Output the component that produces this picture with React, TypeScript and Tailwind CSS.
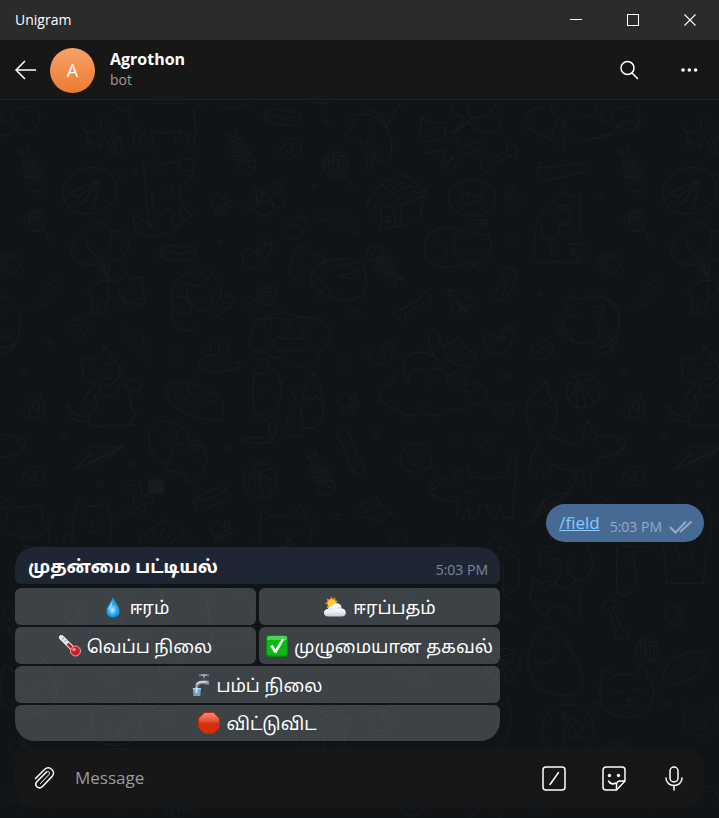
import type { ReactNode } from "react";

type SpotProps = { x: number; y: number; r?: number; s?: number };

const place = ({ x, y, r = 0, s = 1 }: SpotProps) => `translate(${x} ${y}) rotate(${r}) scale(${s})`;

const Paw = (p: SpotProps) => (
  <g transform={place(p)}>
    <path d="M-28 8C-36-8-22-30-8-28C2-26 0-22 6-16C14-8 14 4 4 8C-8 10-20 20-28 8Z" />
    <ellipse cx="18" cy="-20" rx="7" ry="10" />
    <ellipse cx="27" cy="0" rx="8" ry="10" />
    <circle cx="12" cy="22" r="9" />
    <circle cx="-10" cy="26" r="7" />
  </g>
);

const Bone = (p: SpotProps) => (
  <g transform={place(p)}>
    <path d="M-36-8C-34-26-52-30-54-14C-66-12-66 8-54 10C-52 26-34 24-34 8L34 8C34 24 52 26 54 10C66 8 66-12 54-14C52-30 34-26 36-8Z" />
  </g>
);

const Yarn = (p: SpotProps) => (
  <g transform={place(p)}>
    <circle r="34" />
    <path d="M-32-8Q0-34 26-20M-32 4Q0-22 32-8M-16-28Q-24 8-6 32M-4-32Q-14 0 8 32M12-10Q2 10 20 26M22-4Q16 12 28 18M20 30Q44 34 40 52Q44 62 56 60" />
  </g>
);

const Spiral = (p: SpotProps) => (
  <g transform={place(p)}>
    <path d="M-8-30C14-38 34-22 32 0C30 30-14 38-30 14C-40-10-14-22 0-12C10-4 6 10-6 10C-14 10-14 2-10 0" />
  </g>
);

const FishBone = (p: SpotProps) => (
  <g transform={place(p)}>
    <path d="M-16-70L0-52L18-70L10-40L-6-40ZM0-40L0 36M-28 36Q-26 62 0 70Q26 62 28 36Q0 24-28 36Z" />
    <path d="M-20-26L0-16L20-26M-24-12L0-2L24-12M-26 2L0 12L26 2M-28 16L0 26L28 16" />
    <path d="M-18-32L0-22L18-32M-22-18L0-8L22-18M-26-4L0 6L26-4M-28 10L0 20L28 10" />
    <circle cx="8" cy="48" r="3" />
  </g>
);

const Collar = (p: SpotProps) => (
  <g transform={place(p)}>
    <path d="M-54-10C-40-24 40-24 54-10L54 14C40 28-40 28-54 14ZM-54-10C-40 4 40 4 54-10M-14 2V24H14V2M-38 8V12M-26 12V16M26 12V16M38 8V12M-48 0V18" />
  </g>
);

const Bird = (p: SpotProps) => (
  <g transform={place(p)}>
    <path d="M-46 0L-36-4C-32-18-16-22-8-10L0 0C0-24 16-30 24-44C30-34 24-28 24-28C34-36 46-36 48-32C44-24 38-20 38-20L48-16C40-4 30 4 34 10C30 34-4 52-30 36C-42 24-42 10-38 4ZM-24-2V0M2 0L14-16M10 4L24-12" />
  </g>
);

const Mouse = (p: SpotProps) => (
  <g transform={place(p)}>
    <path d="M-70-16C-88-14-90-44-70-42C-62-38-66-32-70-32M-70-16L60 38C58 20 46 12 42 0C36-20 24-20 18-10C0-50-42-50-46-16M18-10C20 2 30 12 42 10M38 16V20M-70-16L-46-8" />
  </g>
);

const Flame = (p: SpotProps) => (
  <g transform={place(p)}>
    <path d="M22-46C18-26 32-14 30 12C28 44-26 44-30 12C-30-8-12-14-10-34C-2-26 0-22-2-14C12-22 16-34 22-46ZM-20 10C-12 0-8 4-4-8C0 0 2 2 0 8L16-8C20 10 14 26 0 30C-10 24-16 20-20 10Z" />
  </g>
);

const Plane = (p: SpotProps) => (
  <g transform={place(p)}>
    <path d="M42-40L-50 2L-20 12L42-40L26 40L-2 22L42-40M-20 12L-14 36L-2 22" />
  </g>
);

const Heart = (p: SpotProps) => (
  <g transform={place(p)}>
    <path d="M0 28C-18 16-34-2-26-16C-18-26-6-22-2-10C4-24 24-26 28-10C32 8 16 22 0 28Z" />
  </g>
);

const Ball = (p: SpotProps) => (
  <g transform={place(p)}>
    <circle r="51" />
    <circle cx="-14" cy="-16" r="10" />
    <path d="M-24-20L-46-22M-22-8L-44 28M-14-6Q-20 20-22 46M-8-8Q6 20 6 50M-4-12Q24 10 34 38M-4-18Q30-10 50 10M-8-24Q18-34 36-36M-16-26L-20-46" />
  </g>
);

const Kennel = (p: SpotProps) => (
  <g transform={place(p)}>
    <path d="M-48-56L16-86L88-34L86-20L14 12L6-10L-48-56L-92 14L-72 24L-40-26M14 12V70L72 46L80-18M-70 26L-50 82L14 70M-48 80V30C-44 4-10 6-6 32V72M6-10L88-34M-12-46L24-58M0-32L44-48M14-22L60-34M24-6V8M40-10V2M58-16V-6M-36 44H-20L-32 60H-18" />
  </g>
);

const Cloud = (p: SpotProps) => (
  <g transform={place(p)}>
    <path d="M-130 50C-160 56-170 20-196 22C-186-8-170-30-144-34C-150-66-112-76-98-54C-82-80-50-88-40-60C-20-88 20-84 26-54C60-84 94-50 86-26C120-40 154-22 150 8C140 42 100 40 90 34C80 60 50 58 30 50C0 80-40 74-60 56C-80 80-120 74-130 50ZM-98-54C-92-36-100-30-112-32M-40-60C-48-36-36-24-20-32M26-54C18-44 24-30 34-30M86-26C70-22 76-4 86-6M-60 56C-66 36-50 24-36 32M90 34C76 30 82 16 90 18" />
  </g>
);

const Cat = (p: SpotProps) => (
  <g transform={place(p)} strokeWidth="3">
    <path d="M-60 0C-66-30-60-60-56-76Q-44-72-36-60Q-10-68 14-62L30-88Q44-72 46-50C62-30 60-8 44 14C20 40-44 36-60 0ZM-30-20Q-22-32-14-22M14-26Q22-36 30-28M-4-8L4-12L8-4ZM2-4V4Q-8 12-12 4M2 4Q12 8 16 0M50-44L60-54M54-32L70-36M-62 0L-76-2M-58 8L-72 16" />
  </g>
);

const Wallpaper = () => {
  const repeated: ReactNode = (
    <>
      <path d="M0 55C20 70 40 62 40 34C66 18 110 10 120 42C124 74 90 104 60 94C48 92 48 72 60 68M44 86C38 106 18 110 8 104C4 114 0 116 0 116M0 30C16 30 16 48 2 46" />
      <path d="M244 70Q246 86 262 96L286 94L304 80Q298 56 318 52L324 66Q340 76 344 92L320 100Q312 118 296 122L300 146L280 126Q266 126 262 136Q256 122 270 112L256 96M322 122L360 110L368 158L350 164L348 148L334 164L322 122M338 124L350 144M354 118L336 140" />
      <FishBone x={95} y={210} r={-22} />
      <ellipse cx="270" cy="272" rx="82" ry="68" transform="rotate(-20 270 272)" />
      <Plane x={257} y={278} />
      <circle cx="362" cy="226" r="8" />
      <Yarn x={105} y={362} s={0.95} />
      <Paw x={30} y={490} r={180} />
      <path d="M296 472C246 450 244 372 296 366C346 372 346 450 300 472ZM252 412C210 414 200 460 236 484C256 498 280 498 292 490M334 400C366 380 400 410 384 444C372 470 350 484 330 486M296 476L326 538L330 486M306 478L328 538M288 490L326 536" />
      <path d="M326 540C300 540 276 560 264 582L280 588L274 640L288 642L294 606L300 640L312 642L324 590L372 628L378 616L360 592M326 540C320 570 326 590 334 600M326 540L352 544Q356 534 364 534L380 516L392 536L430 530L424 566L438 602Q424 622 406 612L378 608Q352 580 354 546M386 560V564M410 564V568M406 602Q420 590 434 602" />
      <Mouse x={134} y={590} r={100} s={0.8} />
      <path d="M0 588C30 592 58 622 60 662C60 700 54 752 0 764M0 616C20 622 20 650 0 654M0 712C20 700 40 710 38 738L0 744" />
      <circle cx="74" cy="816" r="8" />
      <path d="M244 768L266 780Q290 770 306 776L312 740Q328 752 332 772C356 786 362 812 358 824C352 850 330 854 322 856C296 866 250 846 248 820ZM276 816Q284 806 292 818M314 796Q324 784 330 794M306 824L322 828M310 832Q320 842 330 832M358 800L368 790M362 808L374 806M242 838L252 834M300 862C310 880 298 880 310 882C318 892 344 892 346 880C358 876 356 864 352 858M352 824L404 844Q424 840 426 848L412 876Q394 868 390 862L358 850M282 852C262 880 254 900 244 904L250 922L264 924L286 884L290 930M206 914C202 970 240 966 268 966M206 914C216 940 230 950 268 950M268 940C258 970 280 980 296 978L404 974Q396 964 388 968M376 850C394 880 392 900 392 930Q410 926 408 940L392 972M290 930Q266 932 266 956" />
      <Flame x={102} y={926} />
      <circle cx="190" cy="1008" r="8" />
      <path d="M0 1004C20 1004 50 1008 76 1020C80 1050 50 1072 0 1072M76 1020Q50 1010 50 1026Q56 1044 72 1044" />
      <path d="M222 1110L260 1070L274 1040L370 1040L222 1110L240 1098M260 1070L370 1040L268 1086M280 1104L370 1040L262 1096M274 1040L260 1076" />
      <Spiral x={102} y={1130} />
      <circle cx="300" cy="1154" r="8" />
      <path d="M0 1226L130 1216L126 1260L156 1258C150 1290 136 1300 120 1302C90 1330 20 1300 0 1280M60 1304L74 1340H150L146 1300M0 1190C30 1200 40 1220 44 1230M14 1220C28 1250 20 1270 0 1272M72 1280L82 1290" />
      <path d="M230 1340C214 1310 212 1270 222 1240L236 1202L260 1218H296L318 1204C324 1224 340 1260 334 1290Q332 1320 320 1340M256 1244V1260M296 1244V1260M270 1272L276 1280L284 1272M276 1280V1290M266 1294Q278 1300 288 1294M212 1256L202 1250M212 1270L200 1270M336 1256L346 1250M336 1272H346M190 1340C190 1300 208 1290 212 1310V1340" />
    </>
  );
  return (
    <svg
      aria-hidden="true"
      viewBox="0 0 2157 2154"
      preserveAspectRatio="xMinYMin slice"
      className="h-full min-h-0 w-full [grid-area:1/1] text-[#161b1f]"
      fill="none"
      stroke="currentColor"
      strokeWidth="4"
      strokeLinecap="round"
      strokeLinejoin="round"
    >
      {repeated}
      <g transform="translate(1800 0)">{repeated}</g>

      <path d="M330 0C350 30 370 30 388 34L390 62L420 86C400 90 396 120 404 134C430 140 420 110 432 96L446 134Q458 140 460 130L452 92Q490 106 546 92L520 120Q530 132 540 124L562 98L570 110Q556 134 570 138C586 140 586 110 586 90L582 24C600 16 610 8 612 0M452 10H560" />
      <circle cx="394" cy="18" r="7" />
      <circle cx="403" cy="217" r="7" />
      <path d="M460 382L402 344C396 370 406 384 408 392C430 416 480 412 510 396L576 346C556 338 540 310 540 260C570 250 586 220 582 182C570 170 550 178 534 184Q490 190 476 194L460 176L458 198L430 186L436 260C462 260 466 330 442 336Q444 364 460 382ZM534 184C536 220 570 220 580 200M496 262C494 290 520 286 516 262M472 224H474M488 208H490M476 352C490 320 526 326 520 350L516 378L530 374M538 334Q544 356 556 362M436 260L440 336" />
      <Collar x={848} y={50} r={6} />
      <path d="M660 0Q664 26 690 26Q740 20 762 4M932 4Q960 16 996 6M1080 42Q1048 42 1056 60L1064 76L1034 100Q1050 112 1080 124" />
      <circle cx="978" cy="67" r="7" />
      <FishBone x={722} y={158} r={-24} />
      <Spiral x={872} y={148} />
      <Yarn x={1006} y={194} s={1.1} />
      <circle cx="944" cy="261" r="7" />
      <Paw x={662} y={312} />
      <path d="M762 264L790 280Q790 256 814 256C830 260 830 280 816 282C850 280 866 306 850 318C830 326 818 316 816 306Q824 346 790 348L744 324Q770 330 776 312L762 264M776 312L816 300L790 280ZM820 250C836 240 850 256 840 264Z" />
      <Bird x={882} y={384} s={0.82} r={-4} />
      <Mouse x={1024} y={370} s={0.9} />
      <circle cx="662" cy="429" r="7" />
      <Collar x={534} y={458} r={2} />
      <Bird x={768} y={464} />
      <path d="M898 442L918 440L944 466L970 456L976 480M898 442C870 470 864 500 874 520C880 540 906 552 930 548M976 480C930 500 930 550 938 556C980 604 1050 610 1078 590M956 496C980 480 1050 460 1090 500C1104 540 1100 590 1078 590M1080 508L1016 530L1070 538M1060 490L1000 500M930 560L950 530L980 560M952 590L970 562M990 594L990 570M1010 600V578M896 490V494M926 498V502M880 540L900 560" />
      <path d="M520 660C510 600 510 520 580 516C610 514 620 524 630 530L638 514L660 560C670 590 650 630 610 634C570 630 556 590 560 548L590 560L630 530M530 590C560 580 580 620 570 640C550 650 530 640 520 620M644 576L650 570M600 590L612 594M626 604L638 600L630 590M640 632L694 616L650 650ZM660 590Q680 570 688 590Q710 590 700 610L670 606" />
      <Yarn x={802} y={586} s={0.9} />
      <path d="M740 604Q740 620 750 610Q764 590 774 604M776 660Q860 620 914 660M220 660Q236 650 252 660M1044 650Q1060 620 1080 640" />

      <path d="M1080 42C1130 40 1160 70 1174 120C1180 180 1160 200 1140 186C1110 180 1130 140 1150 142M1080 126L1128 170M1098 160L1100 200Q1110 210 1116 200L1120 168M1098 30L1140 40L1160 80C1180 40 1200 10 1210 0M1116 94Q1130 90 1118 80" />
      <circle cx="1102" cy="125" r="5" />
      <path d="M1360 0C1350 30 1370 50 1394 50M1404 0C1394 30 1410 50 1420 54M1486 0C1494 30 1450 54 1410 56L1360 100L1394 54M1360 100L1410 64M1490 28C1520 50 1504 96 1460 96C1430 96 1420 84 1412 72" />
      <path d="M1266 54L1286 66L1320 70L1338 66L1334 98C1340 120 1300 128 1282 122C1260 120 1258 90 1262 80ZM1334 98L1360 100L1384 136L1440 126Q1460 134 1446 148L1388 164L1350 216L1340 206L1360 170L1326 202L1324 190L1336 150L1274 160L1282 146M1282 92V96M1300 88V92M1276 104L1290 112" />
      <Bone x={1498} y={176} r={-32} />
      <path d="M1720 52C1680 60 1690 100 1720 100C1740 136 1780 112 1776 114C1810 120 1810 100 1840 104C1840 70 1860 80 1890 90C1920 90 1930 60 1906 50C1930 20 1910 0 1900 0M1564 76C1580 30 1600 20 1630 26M1564 76L1600 92Q1620 110 1650 112C1656 140 1680 150 1696 146C1690 110 1680 90 1690 66C1660 40 1640 30 1660 0M1720 30C1740 60 1800 50 1790 20M1860 80C1860 60 1880 60 1890 70M1656 112C1660 70 1670 50 1690 40" />
      <path d="M1612 204L1744 190Q1762 200 1752 216L1628 244Q1610 236 1612 204ZM1612 220Q1630 206 1640 236M1616 200Q1614 186 1620 184" />
      <Kennel x={1190} y={306} />
      <ellipse cx="1416" cy="295" rx="70" ry="54" />
      <path d="M1384 296C1394 270 1424 280 1432 292L1446 282V310L1432 302C1414 320 1390 316 1384 296ZM1404 282Q1410 296 1404 310" />
      <Flame x={1534} y={298} s={0.8} r={-20} />
      <path d="M1606 468C1596 400 1606 320 1700 276L1716 292L1740 284Q1744 340 1740 400C1730 420 1700 410 1706 390M1606 468Q1590 460 1596 470C1610 490 1640 494 1656 484L1720 488L1760 484M1636 416C1620 400 1620 380 1624 376M1640 416C1670 420 1690 400 1676 384M1640 416C1670 430 1650 470 1650 480M1706 432L1764 434L1736 482L1706 432M1708 470L1730 440" />
      <circle cx="1688" cy="346" r="30" />
      <circle cx="1688" cy="346" r="20" />
      <circle cx="1806" cy="286" r="7" />
      <circle cx="1539" cy="422" r="8" />
      <circle cx="1619" cy="580" r="7" />
      <path d="M1370 386C1310 370 1270 400 1274 450C1280 500 1330 510 1376 496M1370 400L1396 382L1410 398L1450 406L1466 400L1474 440C1474 480 1440 496 1410 492C1370 480 1350 440 1370 400M1318 430C1350 430 1350 474 1310 476M1380 492L1400 506L1420 498L1440 510L1460 488M1390 456L1400 462M1430 464L1444 462M1426 360H1462V372H1430M1440 380V384" />
      <FishBone x={1154} y={496} r={140} />
      <Collar x={1520} y={552} r={112} s={0.95} />
      <Bone x={1238} y={618} r={-32} />
      <path d="M1342 566L1436 602L1406 616L1400 636L1384 622L1364 644ZM1342 566L1384 622L1406 616M1342 566L1400 636" />
      <path d="M1684 660L1714 586L1740 600C1790 570 1850 600 1856 660C1860 700 1840 720 1810 740M1690 660Q1680 690 1700 700M1780 620L1812 620L1800 650M1700 660Q1720 640 1730 650" />

      <Spiral x={238} y={686} s={0.8} />
      <circle cx="152" cy="727" r="7" />
      <Mouse x={416} y={734} r={22} s={0.8} />
      <path d="M516 660Q524 690 560 692Q590 690 588 676" />
      <Spiral x={526} y={768} s={0.6} />
      <path d="M594 800C600 760 670 750 694 790L722 786L714 812L692 808C670 820 610 820 594 800ZM616 790Q624 770 632 786M650 780Q658 768 664 782M610 764Q604 754 612 742M634 752Q628 740 634 724M656 756Q662 742 654 732M684 756Q678 744 682 730" />
      <path d="M498 860C510 840 570 840 630 870C676 890 672 930 668 958C620 962 570 950 540 930C510 910 490 880 498 860ZM556 860C570 850 650 880 650 902C630 910 570 890 556 860Z" />
      <Bone x={554} y={900} r={36} s={0.55} />
      <path d="M770 756C740 750 744 700 760 690C750 670 770 650 790 662C830 640 850 660 870 664C900 640 960 650 984 680C1000 720 980 750 956 756C960 790 910 810 880 796Q860 790 850 764Q830 780 810 768Q800 752 770 756ZM820 740C810 720 830 700 846 716L900 716C920 700 940 740 914 752L840 752ZM806 700Q820 680 810 670M860 690Q880 680 860 664M904 700Q920 690 906 676M830 732H834M852 738H856M880 730H884M900 738H904" />
      <path d="M762 810L776 824L804 808V796L830 816C850 850 850 920 800 960C780 970 760 960 764 940C754 900 760 860 762 810ZM846 850C880 870 900 920 906 960L908 1008L860 1008L876 996C850 980 860 940 882 944M906 960C900 900 910 860 940 820C970 860 990 960 940 984L912 984M906 900L918 890L930 904L946 886L966 904M808 966V1008L830 1006L826 970M776 868V876M808 864V872M762 950Q780 930 796 958" />
      <ellipse cx="774" cy="1021" rx="50" ry="8" />
      <ellipse cx="796" cy="781" rx="13" ry="6" />
      <Spiral x={1034} y={792} s={0.6} />
      <Paw x={1042} y={910} />
      <path d="M1012 1000L1062 1120Q1080 1124 1096 1110L1040 990Q1020 980 1012 1000ZM1062 1120Q1048 1096 1080 1094" />
      <path d="M510 1090C450 1090 430 1010 460 980C490 950 550 960 566 1020M510 1090L520 1050Q530 1026 566 1030M510 1090Q490 1100 504 1110L550 1120L566 1146C600 1140 630 1100 618 1062C610 1040 590 1030 566 1030M510 984C540 990 540 1030 500 1026L484 1014M570 1024Q600 1010 620 1050M540 1064L554 1056M580 1090L590 1078M566 1030Q580 1060 600 1040" />
      <circle cx="682" cy="1041" r="8" />
      <circle cx="398" cy="1094" r="8" />
      <path d="M376 1170Q372 1150 400 1158Q406 1140 424 1150V1180L450 1190Q462 1200 458 1210L430 1212L438 1240L404 1224L400 1240L372 1236L398 1220L402 1190L376 1170M410 1180V1184" />
      <rect x="446" y="1140" width="44" height="40" rx="4" fill="currentColor" />
      <Collar x={632} y={1194} r={-22} />
      <Ball x={782} y={1142} />
      <FishBone x={960} y={1122} r={-26} />
      <Paw x={662} y={1292} />
      <path d="M420 1312L490 1260L556 1290L590 1340M420 1312L424 1336L494 1350L556 1290M450 1316L470 1290M470 1326L494 1284M490 1330L524 1290" />
      <Cat x={860} y={1330} s={1.3} />
      <circle cx="1015" cy="1250" r="8" />

      <Bird x={1144} y={756} s={0.9} />
      <Bird x={1496} y={720} s={1.05} />
      <path d="M1228 850C1200 820 1210 770 1240 760C1280 750 1300 770 1316 780C1276 740 1280 690 1310 690C1324 696 1314 730 1328 740L1380 712L1396 744L1430 764L1410 800C1380 800 1350 800 1328 740M1346 780Q1338 790 1346 786M1376 776L1386 782" />
      <Cloud x={1318} y={880} s={0.95} />
      <Spiral x={1626} y={750} />
      <path d="M1668 676C1690 720 1740 740 1760 724M1680 660L1720 722M1760 724C1800 740 1810 680 1790 660M1784 760C1800 770 1850 760 1852 730" />
      <circle cx="1520" cy="824" r="8" />
      <Heart x={1510} y={932} />
      <Ball x={1750} y={872} />
      <path d="M1618 1016C1580 990 1560 920 1600 880Q1636 850 1644 838Q1630 870 1660 900C1690 950 1660 990 1644 1004C1680 1020 1720 1036 1742 1034L1762 962L1790 1010Q1830 1006 1876 1020C1880 1050 1840 1066 1796 1072Q1800 1090 1776 1104C1770 1130 1780 1160 1762 1166C1746 1160 1760 1130 1740 1110L1720 1156Q1706 1160 1706 1146L1734 1110Q1690 1116 1650 1090L1650 1130Q1640 1140 1630 1120L1618 1096L1604 1130C1584 1130 1590 1080 1596 1066C1610 1050 1616 1030 1618 1016M1594 910L1612 916L1624 904L1636 912L1656 896M1780 1020L1790 1016" />
      <Spiral x={1462} y={1020} s={0.8} r={180} />
      <circle cx="1126" cy="1003" r="8" />
      <circle cx="1365" cy="1021" r="8" />
      <path d="M1284 1100A46 44 0 1 1 1290 1090L1296 1104Z" />
      <Heart x={1242} y={1072} s={0.8} />
      <path d="M1284 1160C1290 1140 1340 1130 1362 1134L1370 1098L1382 1120L1400 1094L1412 1130Q1480 1140 1524 1126C1526 1090 1530 1060 1542 1070C1556 1090 1550 1120 1544 1150L1538 1250Q1520 1260 1510 1250L1500 1216L1490 1252L1468 1250L1460 1214L1440 1214L1430 1256L1410 1254L1404 1220L1390 1256L1370 1250L1376 1200C1340 1210 1290 1200 1284 1160ZM1284 1160Q1310 1180 1322 1140M1364 1138V1140M1384 1144V1146M1394 1180Q1410 1170 1416 1182Q1414 1196 1400 1196" />
      <path d="M1582 1274L1640 1190L1714 1176L1582 1274M1600 1240L1714 1176M1640 1190L1600 1270M1080 1216L1130 1190L1160 1240L1180 1240L1140 1264L1080 1250M1100 1230L1140 1210" />
      <Heart x={1194} y={1316} />
      <path d="M1460 1340L1490 1300L1540 1340M1320 1340Q1340 1326 1380 1340M1620 1400C1610 1370 1630 1330 1660 1340M1700 1330Q1740 1290 1760 1340" />

      <path d="M1480 1420L1500 1340L1556 1380V1460L1500 1500M1510 1400V1480M1640 1400C1650 1370 1690 1360 1680 1420Q1670 1450 1650 1460M1760 1340C1790 1380 1780 1440 1730 1440C1690 1420 1700 1380 1720 1360M1690 1470L1730 1440M1850 1340V1480Q1880 1500 1910 1460L1900 1340M1880 1380H1900M1990 1340L2000 1450H2110L2120 1350M2030 1340L2040 1380M2070 1350L2080 1390M1590 1490L1600 1430L1620 1450L1660 1440L1680 1460L1740 1480V1550L1720 1560L1700 1520L1650 1520L1640 1550L1620 1540ZM1610 1470V1474M1634 1470V1474" />
      <Bone x={1846} y={1560} r={65} />
      <Paw x={2024} y={1548} />
      <circle cx="1526" cy="1552" r="9" />
      <path d="M1604 1750C1570 1700 1580 1630 1620 1590C1660 1570 1700 1610 1710 1650C1750 1700 1760 1760 1730 1784C1680 1790 1620 1780 1604 1750M1606 1680C1620 1700 1660 1690 1670 1660M1630 1622H1640M1666 1622H1674" />
      <Yarn x={1940} y={1650} />
      <Ball x={1510} y={1696} />
      <path d="M1990 1720C2000 1670 2080 1640 2120 1660C2130 1700 2070 1760 2010 1750Q1990 1740 1990 1720Z" />
      <Bone x={2060} y={1696} r={-30} s={0.55} />
      <Cat x={1884} y={1810} s={1.35} />
      <circle cx="1704" cy="1890" r="78" />
      <Plane x={1710} y={1890} r={-70} />
      <Paw x={1850} y={1950} s={0.9} />
      <circle cx="2000" cy="1812" r="8" />
      <Cat x={2110} y={1880} s={0.9} />
      <path d="M1500 1940C1540 1900 1540 1820 1520 1790M1410 2154Q1460 2080 1500 2154M1840 2110Q1900 2070 1960 2130M2060 2080C2100 2040 2157 2060 2157 2100" />

      <path d="M0 1510Q24 1500 40 1540L60 1600M20 1570L44 1620" />
      <Bone x={20} y={1560} r={55} s={0.8} />
      <Cat x={90} y={1800} s={1.4} />
      <Paw x={56} y={1946} s={0.9} />
      <Paw x={224} y={1550} />
      <path d="M340 1500L470 1450L520 1560L390 1620ZM370 1510L470 1540M620 1500C640 1450 740 1450 760 1530L740 1640H640Z" />
      <Bone x={470} y={1820} r={40} />
      <Cat x={350} y={1900} s={1.2} />
      <Mouse x={1230} y={1720} />
      <Kennel x={960} y={1890} />
      <FishBone x={540} y={1680} r={60} />
      <Bird x={1150} y={1850} />
      <Heart x={330} y={1720} />
      <Cloud x={1180} y={1440} s={0.7} />
      <FishBone x={560} y={2110} r={70} />
      <path d="M0 2080Q50 2040 90 2080L60 2130M110 2070L150 2130M120 2120L160 2100M360 2130Q400 2060 440 2130M20 2100L70 2110" />
      <FishBone x={1640} y={2100} r={60} s={0.8} />
      <Spiral x={1240} y={2120} />
    </svg>
  );
};

const emojiClass = "h-[22px] w-[22px] shrink-0";

const Droplet = () => (
  <svg role="img" aria-label="💧" viewBox="0 0 22 22" className={emojiClass}>
    <defs>
      <linearGradient id="drop" x1="0" y1="0" x2="0" y2="1">
        <stop offset="0" stopColor="#0a8ad8" />
        <stop offset="0.5" stopColor="#25a9f0" />
        <stop offset="1" stopColor="#0797e8" />
      </linearGradient>
      <radialGradient id="dropShine">
        <stop offset="0" stopColor="#d9f6ff" />
        <stop offset="1" stopColor="#7fd6ff" stopOpacity="0.1" />
      </radialGradient>
    </defs>
    <path d="M11 0.500C12 5 17.500 10.500 17.500 15.500A6.500 6 0 0 1 4.500 15.500C4.500 10.500 10 5 11 0.500Z" fill="url(#drop)" />
    <ellipse cx="10.500" cy="14" rx="4.500" ry="6" fill="url(#dropShine)" />
    <path d="M10.600 4C9.500 8 7 11 6.500 14C9 12 10.500 8 10.600 4Z" fill="#b5e9ff" />
  </svg>
);

const SunCloud = () => (
  <svg role="img" aria-label="🌥" viewBox="0 0 24 22" className="h-[22px] w-6 shrink-0">
    <defs>
      <linearGradient id="cloud" x1="0" y1="0" x2="0" y2="1">
        <stop offset="0" stopColor="#ffffff" />
        <stop offset="0.6" stopColor="#f1f2f7" />
        <stop offset="1" stopColor="#c6cbd8" />
      </linearGradient>
    </defs>
    <path d="M8.500 0.500L9.800 3L12.500 1.500L12.300 4.500L15 5L13 7.500L13 11L3.500 12L4.800 8.800L2 7.500L4.500 5.500L3.500 2.500L6.800 3.500Z" fill="#e98a12" />
    <circle cx="8.800" cy="7.200" r="4" fill="#ffc83a" />
    <path d="M5.500 20.500C-0.500 20.500-0.500 13 5 13C5.500 10.500 7.500 10 9 10.500C10.500 5.500 19 6.500 18.500 12.500C24 12.500 24.500 20.500 18.500 20.500Z" fill="url(#cloud)" />
    <path d="M5 14.500C6.500 12.500 9.500 12.500 10.500 14.500M14 12.500C15.500 11 18 11.500 18.500 13" stroke="#d4d8e4" fill="none" />
  </svg>
);

const Thermometer = () => (
  <svg role="img" aria-label="🌡" viewBox="0 0 22 22" className={emojiClass}>
    <path d="M2.500 2.500L15 15" stroke="#e9edf0" strokeWidth="5" strokeLinecap="round" />
    <path d="M9.500 9.500L16 16" stroke="#c5161d" strokeWidth="3" strokeLinecap="round" />
    <path d="M3 4.500L5 2.800M5.500 7L7.500 5M8 9.500L10 7.500" stroke="#77818a" strokeWidth="1" />
    <circle cx="16.500" cy="16" r="5" fill="#cf1f29" stroke="#dfa9ac" />
    <circle cx="15" cy="14.500" r="1.800" fill="#f58f93" />
  </svg>
);

const CheckBox = () => (
  <svg role="img" aria-label="✅" viewBox="0 0 22 22" className={emojiClass}>
    <rect width="22" height="22" rx="3" fill="#078a0c" />
    <rect x="1" y="1" width="20" height="19.500" rx="2.500" fill="#0db914" />
    <path d="M1 3.500A2.500 2.500 0 0 1 3.500 1H18.500A2.500 2.500 0 0 1 21 3.500V5H1Z" fill="#4ed257" />
    <path d="M4 11L6.800 10L9.300 14.500L15.800 4L18.300 4.500L10.300 18H8.500Z" fill="#fff" />
  </svg>
);

const Tap = () => (
  <svg role="img" aria-label="🚰" viewBox="0 0 18 22" className="h-[22px] w-[18px] shrink-0">
    <path d="M8 1H16M12 1V6" stroke="#aebac4" strokeWidth="1.500" strokeLinecap="round" />
    <circle cx="8" cy="1.500" r="1.200" fill="#5f6f7b" />
    <circle cx="16" cy="1.500" r="1.200" fill="#5f6f7b" />
    <path d="M9.500 3.500H14.500L15.500 6.500H8.500Z" fill="#3e5260" />
    <path d="M3 12.500C3.500 8 6.500 6.500 10 6.500H16.500C17.500 8 17.500 9.500 16.500 11L11 10C8.500 9.500 6.500 11 6 13Z" fill="#7c8b97" />
    <path d="M4.500 10.500C6 7.800 9 7.800 15.500 8" stroke="#edf4f8" strokeWidth="1.200" fill="none" />
    <path d="M0.800 14H9L8.300 22H1.500Z" fill="#6fa5c6" />
    <path d="M0.800 14H9L8.800 15.500H1Z" fill="#a9cbdc" />
    <path d="M4.500 12.500V19" stroke="#c6e7f7" strokeWidth="1.800" />
  </svg>
);

const StopSign = () => (
  <svg role="img" aria-label="🛑" viewBox="0 0 22 22" className={emojiClass}>
    <defs>
      <linearGradient id="stop" x1="0" y1="0" x2="0" y2="1">
        <stop offset="0" stopColor="#f58a76" />
        <stop offset="0.45" stopColor="#e44a2c" />
        <stop offset="0.5" stopColor="#d52f0c" />
        <stop offset="1" stopColor="#d62c08" />
      </linearGradient>
    </defs>
    <path d="M6.500 0.500H15.500L21.500 6.500V15.500L15.500 21.500H6.500L0.500 15.500V6.500Z" fill="url(#stop)" stroke="#b92708" />
  </svg>
);

type Key = { icon: ReactNode; label: string; shape: string };

const keyboard: Key[] = [
  { icon: <Droplet />, label: "ஈரம்", shape: "h-[37px]" },
  { icon: <SunCloud />, label: "ஈரப்பதம்", shape: "h-[37px]" },
  { icon: <Thermometer />, label: "வெப்ப நிலை", shape: "h-[37px]" },
  { icon: <CheckBox />, label: "முழுமையான தகவல்", shape: "h-[37px]" },
  { icon: <Tap />, label: "பம்ப் நிலை", shape: "h-[37px] col-span-2" },
  { icon: <StopSign />, label: "விட்டுவிட", shape: "h-9 col-span-2 rounded-b-[20px]" },
];

const windowButton = "flex h-full w-[57px] items-center justify-center";
const iconButton = "flex h-[60px] w-[60px] items-center justify-center";

export default function App() {
  return (
    <div className="flex h-screen min-h-[480px] flex-col overflow-hidden bg-[#101417] font-['Open_Sans','Noto_Sans_Tamil',sans-serif] text-white">
      <div className="flex h-10 shrink-0 items-center bg-[#2b2b2b] pr-px pb-px pl-[15px]">
        <span className="flex-1 text-sm">Unigram</span>
        <button aria-label="Minimize" className={windowButton}>
          <svg width="12" height="12" shapeRendering="crispEdges">
            <path d="M0 5.500H12" stroke="#fff" />
          </svg>
        </button>
        <button aria-label="Maximize" className={windowButton}>
          <svg width="12" height="12" fill="none" shapeRendering="crispEdges">
            <rect x="0.500" y="0.500" width="11" height="11" stroke="#fff" />
          </svg>
        </button>
        <button aria-label="Close" className={windowButton}>
          <svg width="12" height="12">
            <path d="M0.500 0.500L11.500 11.500M11.500 0.500L0.500 11.500" stroke="#fff" strokeWidth="1.100" />
          </svg>
        </button>
      </div>

      <header className="flex h-[60px] shrink-0 items-center border-b border-[#1f2224] bg-[#171717] pt-px">
        <button aria-label="Back" className="flex h-full w-[50px] items-center justify-center">
          <svg width="22" height="20" fill="none" stroke="#fff" strokeWidth="1.500">
            <path d="M22 10H2M11 1L2 10L11 19" />
          </svg>
        </button>
        <div className="flex size-[45px] items-center justify-center rounded-full bg-linear-to-b from-[#f7a168] to-[#ee7a2b] text-lg">
          A
        </div>
        <div className="ml-[15px] flex-1 pb-[3px]">
          <h1 className="text-base leading-[22px] font-bold">Agrothon</h1>
          <p className="text-sm leading-5 text-[#9b9b9b]">bot</p>
        </div>
        <button aria-label="Search" className={iconButton}>
          <svg width="20" height="20" fill="none" stroke="#fff" strokeWidth="1.500" strokeLinecap="round">
            <circle cx="8.500" cy="8" r="6.500" />
            <path d="M13 13L18.500 18.500" />
          </svg>
        </button>
        <button aria-label="More" className={iconButton}>
          <svg width="18" height="4" fill="#fff">
            <circle cx="3" cy="2" r="1.800" />
            <circle cx="9.300" cy="2" r="1.800" />
            <circle cx="15.600" cy="2" r="1.800" />
          </svg>
        </button>
      </header>

      <main className="grid min-h-0 flex-1 grid-rows-[minmax(0,1fr)]">
        <Wallpaper />
        <div className="z-10 flex min-h-0 flex-col justify-end px-[15px] pb-[10px] [grid-area:1/1]">
          <div className="mb-[5px] flex h-[38px] items-center gap-[10px] self-end rounded-full bg-[#476a94] pr-[11px] pl-[13px]">
            <a href="#field" className="text-[17px] leading-6 text-[#83caff] underline">
              /field
            </a>
            <span className="flex items-center gap-[7px] pt-2 text-sm leading-5 text-[#91abc8]">
              5:03 PM
              <svg aria-label="Read" role="img" width="24" height="14" fill="none" stroke="currentColor" strokeWidth="2">
                <path d="M1 7L6.500 12.500L17 1.500M11 12L22.500 1.500" />
              </svg>
            </span>
          </div>

          <div className="w-[485px] max-w-full">
            <div className="mb-1 flex h-[37px] items-center justify-between rounded-t-[20px] rounded-b-md bg-[#1d2632] pr-3 pl-[13px]">
              <p className="text-lg leading-6 font-bold">முதன்மை பட்டியல்</p>
              <span className="pt-2 text-sm leading-5 text-[#7b8793]">5:03 PM</span>
            </div>
            <div className="grid grid-cols-2 gap-x-[3px] gap-y-0.5">
              {keyboard.map((key) => (
                <button
                  key={key.label}
                  className={`flex items-center justify-center gap-[6px] rounded-md bg-[#f0fcff]/20 text-lg whitespace-nowrap ${key.shape}`}
                >
                  {key.icon}
                  <span>{key.label}</span>
                </button>
              ))}
            </div>
          </div>

          <form className="mt-[7px] flex h-[60px] items-center rounded-[20px] bg-[#171717]" onSubmit={(e) => e.preventDefault()}>
            <button type="button" aria-label="Attach" className={iconButton}>
              <svg width="22" height="24" viewBox="0 0 22 24" fill="none" stroke="#fff" strokeWidth="1.500" strokeLinecap="round">
                <path d="M1.500 12.500L10.500 3.500C15.500-1 22.500 5.500 18 10.500L8.500 20.500C4.500 24 -0.500 19.500 3 15.500L12.500 6" />
                <path d="M12.500 6C14.500 4.500 16.500 6.500 15 8.500L6.500 17.500" strokeWidth="1" />
              </svg>
            </button>
            <input
              aria-label="Message"
              placeholder="Message"
              className="min-w-0 flex-1 bg-transparent text-[17px] outline-none placeholder:text-[#9b9b9b]"
            />
            <button type="button" aria-label="Commands" className={iconButton}>
              <svg width="24" height="25" fill="none" stroke="#fff" strokeWidth="1.500" strokeLinecap="round">
                <rect x="1" y="1" width="22" height="23" rx="3" />
                <path d="M16.500 6.500L8 18.500" />
              </svg>
            </button>
            <button type="button" aria-label="Stickers" className={iconButton}>
              <svg width="24" height="25" fill="none" stroke="#fff" strokeWidth="1.500" strokeLinejoin="round">
                <path d="M4 1H20A3 3 0 0 1 23 4V15L14.500 24H4A3 3 0 0 1 1 21V4A3 3 0 0 1 4 1Z" />
                <path d="M23 15H18A3.500 3.500 0 0 0 14.500 18.500V24" />
                <path d="M6.500 15C8 17.500 11 18.500 14 17" strokeLinecap="round" />
                <circle cx="7.500" cy="9.500" r="1.700" fill="#fff" stroke="none" />
                <circle cx="16.500" cy="9.500" r="1.700" fill="#fff" stroke="none" />
              </svg>
            </button>
            <button type="button" aria-label="Record voice message" className={iconButton}>
              <svg width="18" height="25" fill="none" stroke="#fff" strokeWidth="1.500" strokeLinecap="round">
                <rect x="5" y="1" width="8" height="15" rx="4" />
                <path d="M1 12C1 22 17 22 17 12M9 20V24" />
              </svg>
            </button>
          </form>
        </div>
      </main>
    </div>
  );
}
